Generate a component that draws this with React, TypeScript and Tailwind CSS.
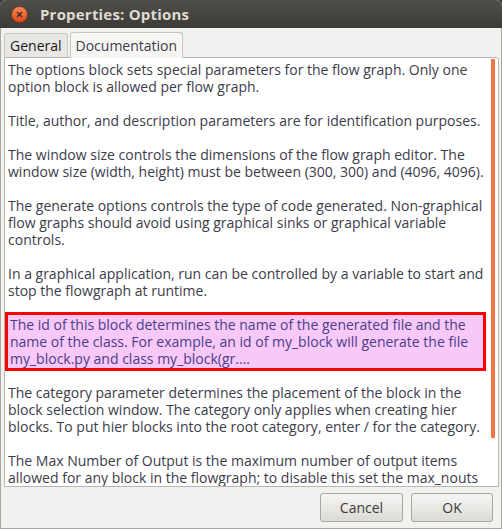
import React from "react";

const paragraphs: string[][] = [
  [
    "The options block sets special parameters for the flow graph. Only one",
    "option block is allowed per flow graph.",
  ],
  ["Title, author, and description parameters are for identification purposes."],
  [
    "The window size controls the dimensions of the flow graph editor. The",
    "window size (width, height) must be between (300, 300) and (4096, 4096).",
  ],
  [
    "The generate options controls the type of code generated. Non-graphical",
    "flow graphs should avoid using graphical sinks or graphical variable",
    "controls.",
  ],
  [
    "In a graphical application, run can be controlled by a variable to start and",
    "stop the flowgraph at runtime.",
  ],
];

const highlighted = [
  "The id of this block determines the name of the generated file and the",
  "name of the class. For example, an id of my_block will generate the file",
  "my_block.py and class my_block(gr....",
];

const after: string[][] = [
  [
    "The category parameter determines the placement of the block in the",
    "block selection window. The category only applies when creating hier",
    "blocks. To put hier blocks into the root category, enter / for the category.",
  ],
  [
    "The Max Number of Output is the maximum number of output items",
    "allowed for any block in the flowgraph; to disable this set the max_nouts",
  ],
];

function Para({ lines }: { lines: string[] }) {
  return (
    <div className="mb-[17px]">
      {lines.map((l, i) => (
        <div key={i} className="h-[17px] leading-[17px] whitespace-nowrap">
          {l}
        </div>
      ))}
    </div>
  );
}

export default function App() {
  return (
    <div
      className="w-[502px] h-[529px] bg-[#3c3b37] overflow-hidden"
      style={{ fontFamily: '"Open Sans", "DejaVu Sans", sans-serif' }}
    >
      <div className="w-full h-full flex flex-col rounded-t-[6px] overflow-hidden bg-[#f2f1f0]">
        {/* Title bar */}
        <div className="h-[28px] bg-gradient-to-b from-[#504e48] to-[#3c3b37] flex items-center pl-[11px] shrink-0">
          <div className="w-[17px] h-[17px] rounded-full bg-gradient-to-b from-[#f5865a] to-[#dd4814] border border-[#8a3a18] flex items-center justify-center">
            <svg width="7" height="7" viewBox="0 0 7 7">
              <path d="M1 1L6 6M6 1L1 6" stroke="#3c2a20" strokeWidth="1.4" />
            </svg>
          </div>
          <div className="ml-[12px] text-[15px] font-bold text-[#dfdbd2] tracking-[0.2px]">
            Properties: Options
          </div>
        </div>

        {/* Body */}
        <div className="flex-1 flex flex-col border-l border-r border-b border-[#a8a6a0] pl-[3px] pr-[2px]">
          {/* Tabs */}
          <div className="flex items-end h-[29px] pt-[3px] gap-[2px] shrink-0">
            <div className="h-[24px] px-[5px] flex items-center border border-b-0 border-[#c8c6c0] rounded-t-[3px] bg-[#e8e7e5] text-[14px] text-[#1a1a1a]">
              General
            </div>
            <div className="h-[26px] px-[5px] flex items-center border border-b-0 border-[#c8c6c0] rounded-t-[3px] bg-[#f7f6f5] text-[14px] text-[#3c3c4a] -mb-[1px] relative z-10">
              Documentation
            </div>
          </div>

          {/* Text area */}
          <div className="h-[430px] border border-[#b8b6b0] rounded-tr-[3px] bg-white flex shrink-0">
            <div className="flex-1 overflow-hidden pl-[3px] pt-[3px] text-[14px] text-[#3c3c4a]">
              {paragraphs.map((p, i) => (
                <Para key={i} lines={p} />
              ))}
              <div className="-ml-[3px] mr-[5px] -mt-[4px] mb-[13px] border-[3px] border-[#ff0000] bg-[#f8c8f8] text-[#4a3f8a] pl-[2px] py-[1px]">
                {highlighted.map((l, i) => (
                  <div key={i} className="h-[17px] leading-[17px] whitespace-nowrap">
                    {l}
                  </div>
                ))}
              </div>
              {after.map((p, i) => (
                <Para key={i} lines={p} />
              ))}
            </div>
            <div className="w-[7px] flex justify-start pt-[1px] pb-[48px]">
              <div className="w-[4px] h-full bg-[#f07746]" />
            </div>
          </div>

          {/* Buttons */}
          <div className="flex-1 flex justify-end items-center gap-[8px] pr-[6px]">
            <button className="w-[83px] h-[29px] rounded-[3px] border border-[#a9a7a2] bg-gradient-to-b from-[#f7f6f5] to-[#dcdad5] text-[14px] text-[#3c3c3c]">
              Cancel
            </button>
            <button className="w-[82px] h-[29px] rounded-[3px] border border-[#a9a7a2] bg-gradient-to-b from-[#f7f6f5] to-[#dcdad5] text-[14px] text-[#3c3c3c]">
              OK
            </button>
          </div>
        </div>
      </div>
    </div>
  );
}
